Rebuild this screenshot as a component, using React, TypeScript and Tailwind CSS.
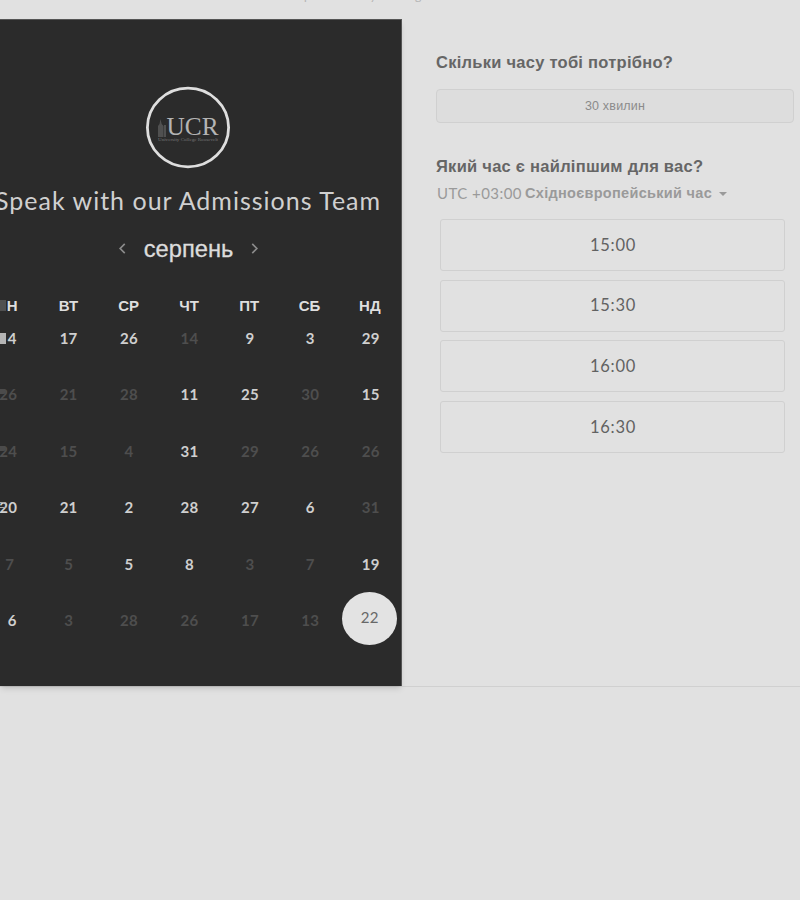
import React from "react";

type Day = { n: string; on?: boolean; selected?: boolean; lead?: "block" | "bars" | "lines" };

const LATO = "font-['Lato','Liberation_Sans',sans-serif]";

const weekdays = ["Н", "ВТ", "СР", "ЧТ", "ПТ", "СБ", "НД"];

const weeks: Day[][] = [
  [{ n: "4", on: true, lead: "block" }, { n: "17", on: true }, { n: "26", on: true }, { n: "14" }, { n: "9", on: true }, { n: "3", on: true }, { n: "29", on: true }],
  [{ n: "26", lead: "bars" }, { n: "21" }, { n: "28" }, { n: "11", on: true }, { n: "25", on: true }, { n: "30" }, { n: "15", on: true }],
  [{ n: "24", lead: "bars" }, { n: "15" }, { n: "4" }, { n: "31", on: true }, { n: "29" }, { n: "26" }, { n: "26" }],
  [{ n: "20", on: true, lead: "lines" }, { n: "21", on: true }, { n: "2", on: true }, { n: "28", on: true }, { n: "27", on: true }, { n: "6", on: true }, { n: "31" }],
  [{ n: "7" }, { n: "5" }, { n: "5", on: true }, { n: "8", on: true }, { n: "3" }, { n: "7" }, { n: "19", on: true }],
  [{ n: "6", on: true }, { n: "3" }, { n: "28" }, { n: "26" }, { n: "17" }, { n: "13" }, { n: "22", selected: true }],
];

const slots = ["15:00", "15:30", "16:00", "16:30"];

function Logo() {
  return (
    <svg className="block h-[84px] w-[86px]" viewBox="0 0 86 84">
      <ellipse cx="43" cy="41.500" rx="40.600" ry="39.400" fill="none" stroke="#dedede" strokeWidth="2.800" />
      <g fill="#505050">
        <path d="M13 40l1.500-2 1-5 1.200 5 1.800 2v11h-5.500z" />
        <path d="M19 39h2v12h-2z" />
      </g>
      <text x="21.500" y="49" fontFamily="Liberation Serif" fontSize="26" textLength="52" lengthAdjust="spacingAndGlyphs" fill="#b4b4b4">UCR</text>
      <text x="13" y="54.500" fontFamily="Liberation Serif" fontSize="4.200" textLength="60" lengthAdjust="spacingAndGlyphs" fill="#777">University College Roosevelt</text>
    </svg>
  );
}

function Lead({ kind }: { kind: Day["lead"] }) {
  if (kind === "block") return <i className="absolute left-[22px] top-[5px] h-[11px] w-[6px] bg-[#b5b5b5]" />;
  if (kind === "bars") return <i className="absolute left-[22px] top-[5px] h-[5px] w-[6px] rounded-r-sm bg-[#4b4b4b]" />;
  if (kind === "lines") return <i className="absolute left-[22px] top-[5px] h-[6px] w-[7px] rounded-r-sm border-y border-[#aaa]" />;
  return null;
}

function DayCell({ day, first }: { day: Day; first: boolean }) {
  if (day.selected) {
    return (
      <div className="-ml-[2px] -mt-[18px] flex h-[53px] w-[55px] items-center justify-center justify-self-center rounded-[50%] bg-[#e3e3e3] pb-[2px] text-[#686868]">
        {day.n}
      </div>
    );
  }
  return (
    <div className={`relative h-5 text-center font-bold leading-5 ${day.on ? "text-[#cfcfcf]" : "text-[#4e4e4e]"} ${first && day.n.length === 1 ? (day.on ? "pl-2" : "pl-[3px]") : ""}`}>
      {day.n}
      <Lead kind={day.lead} />
    </div>
  );
}

export default function App() {
  return (
    <div className={`h-[900px] w-[800px] overflow-hidden bg-[#e1e1e1] ${LATO}`}>
      <div className="h-[19px] overflow-hidden text-[12px] text-[#b4b4b4]">
        <div className="-mt-[11px] flex pl-[304px] leading-[14px]">
          <span className="w-[66px]">p</span>
          <span className="w-[45px]">y</span>
          <span>g</span>
        </div>
      </div>
      <main className="flex h-[668px] border-b border-[#d0d0d0]">
        <section className="relative h-[667px] w-[402px] shrink-0 overflow-hidden border-r border-t border-[#555] bg-[#2b2b2b] pt-[66px] shadow-md">
          <div className="ml-[145px]"><Logo /></div>
          <h1 className="-ml-[5px] mt-[15px] whitespace-nowrap text-[25px] leading-[30px] tracking-[1px] text-[#d0d0d0]">Speak with our Admissions Team</h1>
          <div className="ml-[118px] mt-[18px] flex h-[30px] w-[141px] items-center justify-between text-[#8c8c8c]">
            <svg className="h-[11px] w-2" viewBox="0 0 8 12" fill="none" stroke="currentColor" strokeWidth="1.800"><path d="M7 1L2 6l5 5" /></svg>
            <span className="pt-[3px] font-['Liberation_Sans',sans-serif] text-[23.700px] text-[#dcdcdc] [-webkit-text-stroke:0.3px_#dcdcdc]">серпень</span>
            <svg className="h-[11px] w-2" viewBox="0 0 8 12" fill="none" stroke="currentColor" strokeWidth="1.800"><path d="M1 1L6 6l-5 5" /></svg>
          </div>
          <div className="-ml-[22px] mt-[33px] grid w-[422px] grid-cols-7 text-center font-['Liberation_Sans',sans-serif] text-[15px] font-bold leading-5 text-[#dedede]">
            {weekdays.map((d, i) => (
              <div key={d} className={`relative ${i === 0 ? "pl-2" : ""}`}>
                {d}
                {i === 0 && <i className="absolute left-[22px] top-[4px] h-[11px] w-[6px] bg-[#505050]" />}
              </div>
            ))}
          </div>
          <div className="-ml-[22px] mt-[11.500px] grid w-[423px] auto-rows-[56.5px] grid-cols-7 text-[15px] tracking-[0.3px]">
            {weeks.flatMap((w, r) => w.map((d, c) => <DayCell key={`${r}-${c}`} day={d} first={c === 0} />))}
          </div>
        </section>
        <section className="flex-1 pl-[34px] pt-[33px] font-['Liberation_Sans',sans-serif]">
          <h2 className="text-[16.500px] font-bold leading-5 tracking-[0.26px] text-[#666]">Скільки часу тобі потрібно?</h2>
          <div className="mt-[17px] flex h-[34px] w-[358px] items-center justify-center rounded border border-[#d0d0d0] bg-[#dddddd] text-[12.500px] tracking-[0.2px] text-[#8b8b8b]">30 хвилин</div>
          <h2 className="mt-[33px] text-[16.500px] font-bold leading-5 tracking-[0.26px] text-[#666]">Який час є найліпшим для вас?</h2>
          <div className="mt-[7px] flex h-5 items-center whitespace-nowrap pl-px text-[14.500px] tracking-[0.3px] text-[#9a9a9a]">
            <span className={`${LATO} w-[85px] text-[15px] tracking-[0.45px]`}>UTC +03:00</span>
            <span className="ml-[3px] w-[188px] pt-[2px] font-bold">Східноєвропейський час</span>
            <svg className="ml-[6px] mt-[2px] h-1 w-2" viewBox="0 0 8 4" fill="currentColor"><path d="M0 0h8L4 4z" /></svg>
          </div>
          <div className={`ml-1 mt-4 flex w-[345px] flex-col gap-[8.700px] text-[16.500px] tracking-[0.7px] text-[#626262] ${LATO}`}>
            {slots.map((s) => <button key={s} className="h-[52px] rounded-[3px] border border-[#d0d0d0] pl-px">{s}</button>)}
          </div>
        </section>
      </main>
    </div>
  );
}
